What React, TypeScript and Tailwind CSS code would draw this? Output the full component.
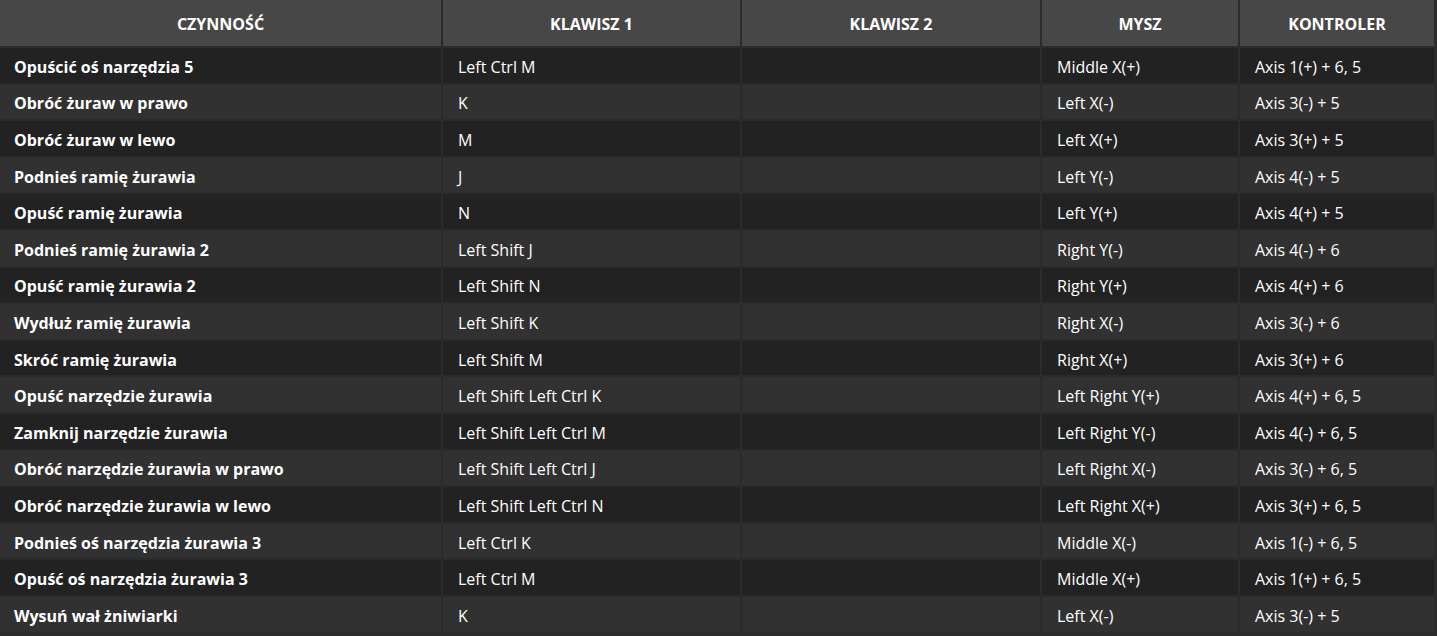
const rows: [string, string, string, string, string][] = [
  ['Opuścić oś narzędzia 5', 'Left Ctrl M', '', 'Middle X(+)', 'Axis 1(+) + 6, 5'],
  ['Obróć żuraw w prawo', 'K', '', 'Left X(-)', 'Axis 3(-) + 5'],
  ['Obróć żuraw w lewo', 'M', '', 'Left X(+)', 'Axis 3(+) + 5'],
  ['Podnieś ramię żurawia', 'J', '', 'Left Y(-)', 'Axis 4(-) + 5'],
  ['Opuść ramię żurawia', 'N', '', 'Left Y(+)', 'Axis 4(+) + 5'],
  ['Podnieś ramię żurawia 2', 'Left Shift J', '', 'Right Y(-)', 'Axis 4(-) + 6'],
  ['Opuść ramię żurawia 2', 'Left Shift N', '', 'Right Y(+)', 'Axis 4(+) + 6'],
  ['Wydłuż ramię żurawia', 'Left Shift K', '', 'Right X(-)', 'Axis 3(-) + 6'],
  ['Skróć ramię żurawia', 'Left Shift M', '', 'Right X(+)', 'Axis 3(+) + 6'],
  ['Opuść narzędzie żurawia', 'Left Shift Left Ctrl K', '', 'Left Right Y(+)', 'Axis 4(+) + 6, 5'],
  ['Zamknij narzędzie żurawia', 'Left Shift Left Ctrl M', '', 'Left Right Y(-)', 'Axis 4(-) + 6, 5'],
  ['Obróć narzędzie żurawia w prawo', 'Left Shift Left Ctrl J', '', 'Left Right X(-)', 'Axis 3(-) + 6, 5'],
  ['Obróć narzędzie żurawia w lewo', 'Left Shift Left Ctrl N', '', 'Left Right X(+)', 'Axis 3(+) + 6, 5'],
  ['Podnieś oś narzędzia żurawia 3', 'Left Ctrl K', '', 'Middle X(-)', 'Axis 1(-) + 6, 5'],
  ['Opuść oś narzędzia żurawia 3', 'Left Ctrl M', '', 'Middle X(+)', 'Axis 1(+) + 6, 5'],
  ['Wysuń wał żniwiarki', 'K', '', 'Left X(-)', 'Axis 3(-) + 5'],
];

const headers = ['Czynność', 'Klawisz 1', 'Klawisz 2', 'Mysz', 'Kontroler'];

export default function App() {
  return (
    <div
      className="w-[1437px] h-[636px] bg-[#2b2b2b] pr-[3px] text-white overflow-hidden"
      style={{ fontFamily: '"Open Sans", "DejaVu Sans", sans-serif' }}
    >
      <div className="grid grid-cols-[441px_297px_298px_196px_194px] gap-x-[2px] gap-y-[2px]">
        {headers.map((h) => (
          <div
            key={h}
            className="h-[46px] bg-[#474747] flex items-center justify-center pt-[1px] text-[16px] font-bold uppercase [font-stretch:90%]"
          >
            {h}
          </div>
        ))}
        {rows.map((row, i) =>
          row.map((cell, j) => (
            <div
              key={`${i}-${j}`}
              className={`h-[34.6px] flex items-center pt-[3px] text-[16px] ${
                i % 2 === 0 ? 'bg-[#222222]' : 'bg-[#313131]'
              } ${j === 0 ? 'font-bold pl-[14px]' : 'font-normal pl-[15px]'}`}
            >
              {cell}
            </div>
          ))
        )}
      </div>
    </div>
  );
}
